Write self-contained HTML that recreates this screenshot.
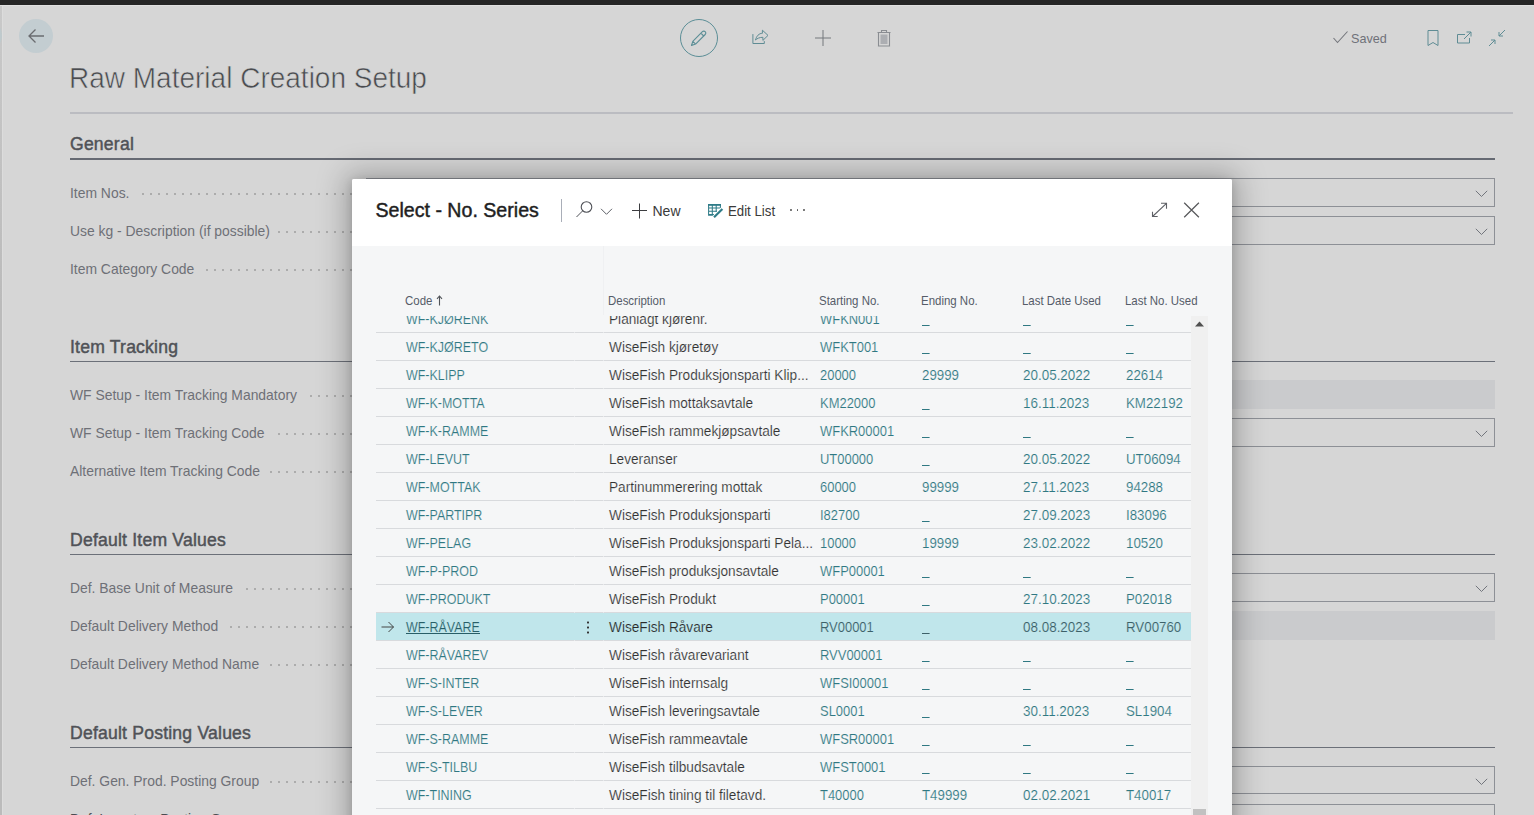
<!DOCTYPE html><html><head><meta charset="utf-8"><title>Raw Material Creation Setup</title><style>
*{margin:0;padding:0;box-sizing:border-box}
html,body{width:1534px;height:815px;overflow:hidden}
body{background:#d6d6d6;font-family:"Liberation Sans",sans-serif;position:relative}
.a{position:absolute;white-space:nowrap}
#topbar{left:0;top:0;width:1534px;height:5px;background:#262626}
#topline{left:0;top:5px;width:1534px;height:1px;background:#e0e0e0}
#leftstrip{left:0;top:6px;width:2px;height:809px;background:linear-gradient(#c9c9c9,#bbbbbb 300px);overflow:hidden}
.lbl{left:70px;font-size:13.9px;color:#6e7077;line-height:16px}
.dots{height:2px;background-image:linear-gradient(to right,#acacac 2px,transparent 2px);background-size:8px 2px;background-repeat:repeat-x}
.sec{left:70px;font-size:17.6px;letter-spacing:0.2px;color:#505257;-webkit-text-stroke:0.45px #505257;line-height:20px}
.secline{left:70px;width:1425px;height:1px;background:#6c7079}
.inp{left:366px;width:1129px;height:29px;border:1px solid #8d9096}
.gblk{left:366px;width:1129px;height:29px;background:#cacbcd}
.chev{position:absolute;right:6.5px;top:10.5px}
#dlg{left:352px;top:179px;width:880px;height:660px;background:#f5f6f7;border-radius:2px;overflow:hidden;
 box-shadow:0 0 30px 6px rgba(0,0,0,0.26), 0 2px 10px rgba(0,0,0,0.14)}
#dlghead{left:0;top:0;width:880px;height:67px;background:#fff}
.ht{font-size:12.2px;color:#555c69;line-height:14px;transform:scaleX(0.94);transform-origin:0 0}
.cell{font-size:14px;line-height:16px;color:#2f7882;-webkit-text-stroke:0.15px #f5f6f7;transform-origin:0 0}
.desc{color:#333}
.rline{height:1px;background:#dcdee1}
</style></head><body>
<div class="a" id="topbar"></div><div class="a" id="topline"></div><div class="a" id="leftstrip"><div class="a" style="left:-31px;top:13px;width:33px;height:33px;border-radius:50%;background:#bfcacd"></div></div><div class="a" style="left:2px;top:6px;width:1px;height:809px;background:#dcdcdc"></div>
<div class="a" style="left:19px;top:19px;width:34px;height:34px;border-radius:50%;background:#c3cdd1"></div>
<svg class="a" style="left:19px;top:19px" width="34" height="34" viewBox="0 0 34 34"><path d="M25 17H10M16.5 10.5L10 17l6.5 6.5" fill="none" stroke="#6a6c70" stroke-width="1.3"/></svg>
<svg class="a" style="left:678px;top:17px" width="42" height="42" viewBox="0 0 42 42"><circle cx="21" cy="21" r="18.5" fill="none" stroke="#5b8e96" stroke-width="1"/><path d="M13.5 28.5l1.3-4.2 9.6-9.6a1.9 1.9 0 0 1 2.8 2.8l-9.6 9.6z M22.9 16.2l2.8 2.8 M14.8 24.3l2.8 2.8" fill="none" stroke="#5b8e96" stroke-width="1.1" stroke-linejoin="round"/></svg>
<svg class="a" style="left:750px;top:28px" width="20" height="20" viewBox="0 0 20 20"><path d="M2.9 6.1V15.5H14.3V13.1" fill="none" stroke="#5f8c94" stroke-width="1"/><path d="M5.5 12C6.5 8 9 5.3 12.4 5.3V2.2L18 7.4L12.9 12.4V9.3C9.5 9.3 7 10.5 5.5 12Z" fill="none" stroke="#5f8c94" stroke-width="1" stroke-linejoin="miter"/></svg>
<svg class="a" style="left:812.5px;top:28px" width="20" height="20" viewBox="0 0 20 20"><path d="M10 2v16M2 10h16" stroke="#75787d" stroke-width="1"/></svg>
<svg class="a" style="left:874px;top:28px" width="20" height="20" viewBox="0 0 20 20"><path d="M3.5 4.5h13 M7.5 4.5v-2h5v2" fill="none" stroke="#8a8d92" stroke-width="1.1"/><path d="M4.5 4.5v13.5h11v-13.5" fill="none" stroke="#8a8d92" stroke-width="1.1"/><rect x="6.5" y="6.5" width="7" height="9.5" fill="#acaeb2"/></svg>
<svg class="a" style="left:1332px;top:30px" width="17" height="14" viewBox="0 0 17 14"><path d="M1.5 8l4 4.5 10-11" fill="none" stroke="#74767c" stroke-width="1.1"/></svg>
<div class="a" style="left:1351px;top:31.5px;font-size:12.6px;line-height:15px;color:#6f7179">Saved</div>
<svg class="a" style="left:1426px;top:29px" width="14" height="18" viewBox="0 0 14 18"><path d="M2 1.5h10v15l-5-3-5 3z" fill="none" stroke="#5f8c94" stroke-width="1"/></svg>
<svg class="a" style="left:1455px;top:30px" width="18" height="15" viewBox="0 0 18 15"><path d="M10 4.5H2.5v8.5h12V8" fill="none" stroke="#5f8c94" stroke-width="1"/><path d="M9 9l7-7M11.5 2h4.5v4.5" fill="none" stroke="#5f8c94" stroke-width="1"/></svg>
<svg class="a" style="left:1488px;top:29px" width="18" height="18" viewBox="0 0 18 18"><path d="M1 17l6-6M3 11h4v4 M17 1l-6 6M11 3v4h4" fill="none" stroke="#5f8c94" stroke-width="1"/></svg>
<div class="a" style="left:69px;top:60.2px;font-size:28px;line-height:34px;color:#4a4c50;-webkit-text-stroke:0.55px #d6d6d6;transform:scaleY(1.06);transform-origin:0 0">Raw Material Creation Setup</div>
<div class="a" style="left:70px;top:112px;width:1443px;height:2px;background:#bbbcc1"></div>
<div class="a sec" style="top:134px">General</div>
<div class="a secline" style="top:158px;height:2px;background:#666a73"></div>
<div class="a lbl" style="top:185px">Item Nos.</div>
<div class="a dots" style="left:142px;top:193px;width:210px"></div>
<div class="a lbl" style="top:223px">Use kg - Description (if possible)</div>
<div class="a dots" style="left:278px;top:231px;width:74px"></div>
<div class="a lbl" style="top:261px">Item Category Code</div>
<div class="a dots" style="left:206px;top:269px;width:146px"></div>
<div class="a lbl" style="top:387px">WF Setup - Item Tracking Mandatory</div>
<div class="a dots" style="left:310px;top:395px;width:42px"></div>
<div class="a lbl" style="top:425px">WF Setup - Item Tracking Code</div>
<div class="a dots" style="left:278px;top:433px;width:74px"></div>
<div class="a lbl" style="top:463px">Alternative Item Tracking Code</div>
<div class="a dots" style="left:270px;top:471px;width:82px"></div>
<div class="a lbl" style="top:580px">Def. Base Unit of Measure</div>
<div class="a dots" style="left:246px;top:588px;width:106px"></div>
<div class="a lbl" style="top:618px">Default Delivery Method</div>
<div class="a dots" style="left:230px;top:626px;width:122px"></div>
<div class="a lbl" style="top:656px">Default Delivery Method Name</div>
<div class="a dots" style="left:270px;top:664px;width:82px"></div>
<div class="a lbl" style="top:773px">Def. Gen. Prod. Posting Group</div>
<div class="a dots" style="left:270px;top:781px;width:82px"></div>
<div class="a sec" style="top:337px">Item Tracking</div>
<div class="a secline" style="top:361px;height:1px;background:#6c7079"></div>
<div class="a sec" style="top:530px">Default Item Values</div>
<div class="a secline" style="top:554px;height:1px;background:#6c7079"></div>
<div class="a sec" style="top:723px">Default Posting Values</div>
<div class="a secline" style="top:747px;height:1px;background:#6c7079"></div>
<div class="a lbl" style="top:811px;color:#4b4d52">Def. Inventory Posting Group</div>
<div class="a dots" style="left:262px;top:819px;width:90px"></div>
<div class="a inp" style="top:178px;height:29px"><svg class="chev" width="13" height="8" viewBox="0 0 13 8"><path d="M0.8 0.8L6.5 6.5L12.2 0.8" fill="none" stroke="#72757c" stroke-width="1"/></svg></div>
<div class="a inp" style="top:216px;height:29px"><svg class="chev" width="13" height="8" viewBox="0 0 13 8"><path d="M0.8 0.8L6.5 6.5L12.2 0.8" fill="none" stroke="#72757c" stroke-width="1"/></svg></div>
<div class="a gblk" style="top:380px;height:29px"></div>
<div class="a inp" style="top:418px;height:29px"><svg class="chev" width="13" height="8" viewBox="0 0 13 8"><path d="M0.8 0.8L6.5 6.5L12.2 0.8" fill="none" stroke="#72757c" stroke-width="1"/></svg></div>
<div class="a inp" style="top:573px;height:29px"><svg class="chev" width="13" height="8" viewBox="0 0 13 8"><path d="M0.8 0.8L6.5 6.5L12.2 0.8" fill="none" stroke="#72757c" stroke-width="1"/></svg></div>
<div class="a gblk" style="top:611px;height:29px"></div>
<div class="a inp" style="top:766px;height:28px"><svg class="chev" width="13" height="8" viewBox="0 0 13 8"><path d="M0.8 0.8L6.5 6.5L12.2 0.8" fill="none" stroke="#72757c" stroke-width="1"/></svg></div>
<div class="a inp" style="top:804px;height:29px"><svg class="chev" width="13" height="8" viewBox="0 0 13 8"><path d="M0.8 0.8L6.5 6.5L12.2 0.8" fill="none" stroke="#72757c" stroke-width="1"/></svg></div>
<div class="a" id="dlg"><div class="a" id="dlghead"></div><div class="a" style="left:23.5px;top:20px;font-size:19.6px;line-height:22px;color:#1f1f1f;-webkit-text-stroke:0.45px #1f1f1f">Select - No. Series</div><div class="a" style="left:209px;top:20px;width:1px;height:23px;background:#a9aeb8"></div><svg class="a" style="left:221.6px;top:21.3px" width="40" height="20" viewBox="0 0 40 20"><circle cx="12.5" cy="7" r="5.3" fill="none" stroke="#4f5157" stroke-width="1.1"/><path d="M8.7 10.8L2.5 17" stroke="#4f5157" stroke-width="1"/><path d="M27 8.8l5.5 5.5 5.5-5.5" fill="none" stroke="#5d6067" stroke-width="1"/></svg><svg class="a" style="left:280px;top:23.5px" width="16" height="16" viewBox="0 0 16 16"><path d="M7.5 0.5v15M0 7.5h15" stroke="#3c3d40" stroke-width="1"/></svg><div class="a" style="left:300.5px;top:24px;font-size:14px;line-height:16px;color:#3a3a3a">New</div><svg class="a" style="left:356px;top:25px" width="16" height="15" viewBox="0 0 16 15"><rect x="0" y="0" width="13" height="1.8" fill="#2f7c88"/><path d="M0.6 0.5V11.2H6 M0.5 4H12.5 M0.5 7.2H9 M0.5 10.6H6 M4.3 1V11 M8.2 1V8 M12.4 0.5V4.5" fill="none" stroke="#2f7c88" stroke-width="1.05"/><path d="M6 13.3L14.4 5" stroke="#fff" stroke-width="4"/><path d="M6 13.3L14.4 5" stroke="#2f7c88" stroke-width="2.2"/></svg><div class="a" style="left:375.5px;top:24px;font-size:14px;line-height:16px;color:#3a3a3a;transform:scaleX(0.945);transform-origin:0 0">Edit List</div><div class="a" style="left:438.3px;top:30px;width:1.8px;height:1.8px;border-radius:50%;background:#555"></div><div class="a" style="left:444.5px;top:30px;width:1.8px;height:1.8px;border-radius:50%;background:#555"></div><div class="a" style="left:450.8px;top:30px;width:1.8px;height:1.8px;border-radius:50%;background:#555"></div><svg class="a" style="left:799px;top:23px" width="17" height="16" viewBox="0 0 17 16"><path d="M1.5 14.5L15.5 1.3 M10 1.3H15.5V6.7 M1.5 9.8V14.5H6.7" fill="none" stroke="#5f6166" stroke-width="1.1"/></svg><svg class="a" style="left:831px;top:23px" width="17" height="17" viewBox="0 0 17 17"><path d="M1.2 0.8L15.9 15.2M15.9 0.8L1.2 15.2" stroke="#58595c" stroke-width="1.25"/></svg><div class="a" style="left:251px;top:67px;width:1px;height:69px;background:#eff0f2"></div><div class="a ht" style="left:52.5px;top:115px">Code</div><div class="a ht" style="left:256px;top:115px">Description</div><div class="a ht" style="left:466.5px;top:115px">Starting No.</div><div class="a ht" style="left:568.5px;top:115px">Ending No.</div><div class="a ht" style="left:670px;top:115px">Last Date Used</div><div class="a ht" style="left:773px;top:115px">Last No. Used</div><svg class="a" style="left:83.5px;top:115.5px" width="7" height="11" viewBox="0 0 7 11"><path d="M3.5 10.5V1M1 3.8L3.5 1 6 3.8" fill="none" stroke="#505358" stroke-width="1.1"/></svg><div class="a" style="left:24px;top:137px;width:815px;height:520px;overflow:hidden"><div class="a cell" style="left:29.5px;top:-5px;transform:scaleX(0.89)">WF-KJØRENK</div><div class="a cell desc" style="left:233px;top:-5px;transform:scaleX(0.975)">Planlagt kjørenr.</div><div class="a cell" style="left:443.5px;top:-5px;transform:scaleX(0.925)">WFKN001</div><div class="a cell" style="left:545.5px;top:9px;width:8px;height:1px;background:currentColor;transform:scaleX(0.95)"></div><div class="a cell" style="left:647px;top:9px;width:8px;height:1px;background:currentColor;transform:scaleX(0.96)"></div><div class="a cell" style="left:750px;top:9px;width:8px;height:1px;background:currentColor;transform:scaleX(0.95)"></div><div class="a rline" style="left:0;top:16px;width:815px;background:linear-gradient(to right,#d8dadd 198px,#e8e9eb 198px,#e8e9eb 199px,#d8dadd 199px,#d8dadd 227px,#e8e9eb 227px,#e8e9eb 228px,#d8dadd 228px)"></div><div class="a cell" style="left:29.5px;top:23px;transform:scaleX(0.89)">WF-KJØRETO</div><div class="a cell desc" style="left:233px;top:23px;transform:scaleX(0.975)">WiseFish kjøretøy</div><div class="a cell" style="left:443.5px;top:23px;transform:scaleX(0.925)">WFKT001</div><div class="a cell" style="left:545.5px;top:37px;width:8px;height:1px;background:currentColor;transform:scaleX(0.95)"></div><div class="a cell" style="left:647px;top:37px;width:8px;height:1px;background:currentColor;transform:scaleX(0.96)"></div><div class="a cell" style="left:750px;top:37px;width:8px;height:1px;background:currentColor;transform:scaleX(0.95)"></div><div class="a rline" style="left:0;top:44px;width:815px;background:linear-gradient(to right,#d8dadd 198px,#e8e9eb 198px,#e8e9eb 199px,#d8dadd 199px,#d8dadd 227px,#e8e9eb 227px,#e8e9eb 228px,#d8dadd 228px)"></div><div class="a cell" style="left:29.5px;top:51px;transform:scaleX(0.89)">WF-KLIPP</div><div class="a cell desc" style="left:233px;top:51px;transform:scaleX(0.975)">WiseFish Produksjonsparti Klip...</div><div class="a cell" style="left:443.5px;top:51px;transform:scaleX(0.925)">20000</div><div class="a cell" style="left:545.5px;top:51px;transform:scaleX(0.95)">29999</div><div class="a cell" style="left:647px;top:51px;transform:scaleX(0.96)">20.05.2022</div><div class="a cell" style="left:750px;top:51px;transform:scaleX(0.95)">22614</div><div class="a rline" style="left:0;top:72px;width:815px;background:linear-gradient(to right,#d8dadd 198px,#e8e9eb 198px,#e8e9eb 199px,#d8dadd 199px,#d8dadd 227px,#e8e9eb 227px,#e8e9eb 228px,#d8dadd 228px)"></div><div class="a cell" style="left:29.5px;top:79px;transform:scaleX(0.89)">WF-K-MOTTA</div><div class="a cell desc" style="left:233px;top:79px;transform:scaleX(0.975)">WiseFish mottaksavtale</div><div class="a cell" style="left:443.5px;top:79px;transform:scaleX(0.925)">KM22000</div><div class="a cell" style="left:545.5px;top:93px;width:8px;height:1px;background:currentColor;transform:scaleX(0.95)"></div><div class="a cell" style="left:647px;top:79px;transform:scaleX(0.96)">16.11.2023</div><div class="a cell" style="left:750px;top:79px;transform:scaleX(0.95)">KM22192</div><div class="a rline" style="left:0;top:100px;width:815px;background:linear-gradient(to right,#d8dadd 198px,#e8e9eb 198px,#e8e9eb 199px,#d8dadd 199px,#d8dadd 227px,#e8e9eb 227px,#e8e9eb 228px,#d8dadd 228px)"></div><div class="a cell" style="left:29.5px;top:107px;transform:scaleX(0.89)">WF-K-RAMME</div><div class="a cell desc" style="left:233px;top:107px;transform:scaleX(0.975)">WiseFish rammekjøpsavtale</div><div class="a cell" style="left:443.5px;top:107px;transform:scaleX(0.925)">WFKR00001</div><div class="a cell" style="left:545.5px;top:121px;width:8px;height:1px;background:currentColor;transform:scaleX(0.95)"></div><div class="a cell" style="left:647px;top:121px;width:8px;height:1px;background:currentColor;transform:scaleX(0.96)"></div><div class="a cell" style="left:750px;top:121px;width:8px;height:1px;background:currentColor;transform:scaleX(0.95)"></div><div class="a rline" style="left:0;top:128px;width:815px;background:linear-gradient(to right,#d8dadd 198px,#e8e9eb 198px,#e8e9eb 199px,#d8dadd 199px,#d8dadd 227px,#e8e9eb 227px,#e8e9eb 228px,#d8dadd 228px)"></div><div class="a cell" style="left:29.5px;top:135px;transform:scaleX(0.89)">WF-LEVUT</div><div class="a cell desc" style="left:233px;top:135px;transform:scaleX(0.975)">Leveranser</div><div class="a cell" style="left:443.5px;top:135px;transform:scaleX(0.925)">UT00000</div><div class="a cell" style="left:545.5px;top:149px;width:8px;height:1px;background:currentColor;transform:scaleX(0.95)"></div><div class="a cell" style="left:647px;top:135px;transform:scaleX(0.96)">20.05.2022</div><div class="a cell" style="left:750px;top:135px;transform:scaleX(0.95)">UT06094</div><div class="a rline" style="left:0;top:156px;width:815px;background:linear-gradient(to right,#d8dadd 198px,#e8e9eb 198px,#e8e9eb 199px,#d8dadd 199px,#d8dadd 227px,#e8e9eb 227px,#e8e9eb 228px,#d8dadd 228px)"></div><div class="a cell" style="left:29.5px;top:163px;transform:scaleX(0.89)">WF-MOTTAK</div><div class="a cell desc" style="left:233px;top:163px;transform:scaleX(0.975)">Partinummerering mottak</div><div class="a cell" style="left:443.5px;top:163px;transform:scaleX(0.925)">60000</div><div class="a cell" style="left:545.5px;top:163px;transform:scaleX(0.95)">99999</div><div class="a cell" style="left:647px;top:163px;transform:scaleX(0.96)">27.11.2023</div><div class="a cell" style="left:750px;top:163px;transform:scaleX(0.95)">94288</div><div class="a rline" style="left:0;top:184px;width:815px;background:linear-gradient(to right,#d8dadd 198px,#e8e9eb 198px,#e8e9eb 199px,#d8dadd 199px,#d8dadd 227px,#e8e9eb 227px,#e8e9eb 228px,#d8dadd 228px)"></div><div class="a cell" style="left:29.5px;top:191px;transform:scaleX(0.89)">WF-PARTIPR</div><div class="a cell desc" style="left:233px;top:191px;transform:scaleX(0.975)">WiseFish Produksjonsparti</div><div class="a cell" style="left:443.5px;top:191px;transform:scaleX(0.925)">I82700</div><div class="a cell" style="left:545.5px;top:205px;width:8px;height:1px;background:currentColor;transform:scaleX(0.95)"></div><div class="a cell" style="left:647px;top:191px;transform:scaleX(0.96)">27.09.2023</div><div class="a cell" style="left:750px;top:191px;transform:scaleX(0.95)">I83096</div><div class="a rline" style="left:0;top:212px;width:815px;background:linear-gradient(to right,#d8dadd 198px,#e8e9eb 198px,#e8e9eb 199px,#d8dadd 199px,#d8dadd 227px,#e8e9eb 227px,#e8e9eb 228px,#d8dadd 228px)"></div><div class="a cell" style="left:29.5px;top:219px;transform:scaleX(0.89)">WF-PELAG</div><div class="a cell desc" style="left:233px;top:219px;transform:scaleX(0.975)">WiseFish Produksjonsparti Pela...</div><div class="a cell" style="left:443.5px;top:219px;transform:scaleX(0.925)">10000</div><div class="a cell" style="left:545.5px;top:219px;transform:scaleX(0.95)">19999</div><div class="a cell" style="left:647px;top:219px;transform:scaleX(0.96)">23.02.2022</div><div class="a cell" style="left:750px;top:219px;transform:scaleX(0.95)">10520</div><div class="a rline" style="left:0;top:240px;width:815px;background:linear-gradient(to right,#d8dadd 198px,#e8e9eb 198px,#e8e9eb 199px,#d8dadd 199px,#d8dadd 227px,#e8e9eb 227px,#e8e9eb 228px,#d8dadd 228px)"></div><div class="a cell" style="left:29.5px;top:247px;transform:scaleX(0.89)">WF-P-PROD</div><div class="a cell desc" style="left:233px;top:247px;transform:scaleX(0.975)">WiseFish produksjonsavtale</div><div class="a cell" style="left:443.5px;top:247px;transform:scaleX(0.925)">WFP00001</div><div class="a cell" style="left:545.5px;top:261px;width:8px;height:1px;background:currentColor;transform:scaleX(0.95)"></div><div class="a cell" style="left:647px;top:261px;width:8px;height:1px;background:currentColor;transform:scaleX(0.96)"></div><div class="a cell" style="left:750px;top:261px;width:8px;height:1px;background:currentColor;transform:scaleX(0.95)"></div><div class="a rline" style="left:0;top:268px;width:815px;background:linear-gradient(to right,#d8dadd 198px,#e8e9eb 198px,#e8e9eb 199px,#d8dadd 199px,#d8dadd 227px,#e8e9eb 227px,#e8e9eb 228px,#d8dadd 228px)"></div><div class="a cell" style="left:29.5px;top:275px;transform:scaleX(0.89)">WF-PRODUKT</div><div class="a cell desc" style="left:233px;top:275px;transform:scaleX(0.975)">WiseFish Produkt</div><div class="a cell" style="left:443.5px;top:275px;transform:scaleX(0.925)">P00001</div><div class="a cell" style="left:545.5px;top:289px;width:8px;height:1px;background:currentColor;transform:scaleX(0.95)"></div><div class="a cell" style="left:647px;top:275px;transform:scaleX(0.96)">27.10.2023</div><div class="a cell" style="left:750px;top:275px;transform:scaleX(0.95)">P02018</div><div class="a rline" style="left:0;top:296px;width:815px;background:linear-gradient(to right,#d8dadd 198px,#e8e9eb 198px,#e8e9eb 199px,#d8dadd 199px,#d8dadd 227px,#e8e9eb 227px,#e8e9eb 228px,#d8dadd 228px)"></div><div class="a" style="left:0;top:297px;width:815px;height:28px;background:#c0e6eb"></div><svg class="a" style="left:5px;top:305px" width="14" height="12" viewBox="0 0 14 12"><path d="M0.5 6h12M7.5 1l5 5-5 5" fill="none" stroke="#3d3d3d" stroke-width="0.95"/></svg><div class="a" style="left:29.5px;top:317px;width:74px;height:1.2px;background:#285e67"></div><div class="a" style="left:211px;top:304px;width:2px;height:14px;background-image:radial-gradient(circle,#333 1px,transparent 1.2px);background-size:2px 5px"></div><div class="a cell" style="left:29.5px;top:303px;-webkit-text-stroke:0.15px #c0e6eb;color:#285e67;transform:scaleX(0.89)">WF-RÅVARE</div><div class="a cell desc" style="left:233px;top:303px;-webkit-text-stroke:0.15px #c0e6eb;color:#2a2a2a;transform:scaleX(0.975)">WiseFish Råvare</div><div class="a cell" style="left:443.5px;top:303px;-webkit-text-stroke:0.15px #c0e6eb;color:#3d6068;transform:scaleX(0.925)">RV00001</div><div class="a cell" style="left:545.5px;top:317px;width:8px;height:1px;background:currentColor;-webkit-text-stroke:0.15px #c0e6eb;color:#3d6068;transform:scaleX(0.95)"></div><div class="a cell" style="left:647px;top:303px;-webkit-text-stroke:0.15px #c0e6eb;color:#3d6068;transform:scaleX(0.96)">08.08.2023</div><div class="a cell" style="left:750px;top:303px;-webkit-text-stroke:0.15px #c0e6eb;color:#3d6068;transform:scaleX(0.95)">RV00760</div><div class="a rline" style="left:0;top:324px;width:815px;background:linear-gradient(to right,#d8dadd 198px,#e8e9eb 198px,#e8e9eb 199px,#d8dadd 199px,#d8dadd 227px,#e8e9eb 227px,#e8e9eb 228px,#d8dadd 228px)"></div><div class="a cell" style="left:29.5px;top:331px;transform:scaleX(0.89)">WF-RÅVAREV</div><div class="a cell desc" style="left:233px;top:331px;transform:scaleX(0.975)">WiseFish råvarevariant</div><div class="a cell" style="left:443.5px;top:331px;transform:scaleX(0.925)">RVV00001</div><div class="a cell" style="left:545.5px;top:345px;width:8px;height:1px;background:currentColor;transform:scaleX(0.95)"></div><div class="a cell" style="left:647px;top:345px;width:8px;height:1px;background:currentColor;transform:scaleX(0.96)"></div><div class="a cell" style="left:750px;top:345px;width:8px;height:1px;background:currentColor;transform:scaleX(0.95)"></div><div class="a rline" style="left:0;top:352px;width:815px;background:linear-gradient(to right,#d8dadd 198px,#e8e9eb 198px,#e8e9eb 199px,#d8dadd 199px,#d8dadd 227px,#e8e9eb 227px,#e8e9eb 228px,#d8dadd 228px)"></div><div class="a cell" style="left:29.5px;top:359px;transform:scaleX(0.89)">WF-S-INTER</div><div class="a cell desc" style="left:233px;top:359px;transform:scaleX(0.975)">WiseFish internsalg</div><div class="a cell" style="left:443.5px;top:359px;transform:scaleX(0.925)">WFSI00001</div><div class="a cell" style="left:545.5px;top:373px;width:8px;height:1px;background:currentColor;transform:scaleX(0.95)"></div><div class="a cell" style="left:647px;top:373px;width:8px;height:1px;background:currentColor;transform:scaleX(0.96)"></div><div class="a cell" style="left:750px;top:373px;width:8px;height:1px;background:currentColor;transform:scaleX(0.95)"></div><div class="a rline" style="left:0;top:380px;width:815px;background:linear-gradient(to right,#d8dadd 198px,#e8e9eb 198px,#e8e9eb 199px,#d8dadd 199px,#d8dadd 227px,#e8e9eb 227px,#e8e9eb 228px,#d8dadd 228px)"></div><div class="a cell" style="left:29.5px;top:387px;transform:scaleX(0.89)">WF-S-LEVER</div><div class="a cell desc" style="left:233px;top:387px;transform:scaleX(0.975)">WiseFish leveringsavtale</div><div class="a cell" style="left:443.5px;top:387px;transform:scaleX(0.925)">SL0001</div><div class="a cell" style="left:545.5px;top:401px;width:8px;height:1px;background:currentColor;transform:scaleX(0.95)"></div><div class="a cell" style="left:647px;top:387px;transform:scaleX(0.96)">30.11.2023</div><div class="a cell" style="left:750px;top:387px;transform:scaleX(0.95)">SL1904</div><div class="a rline" style="left:0;top:408px;width:815px;background:linear-gradient(to right,#d8dadd 198px,#e8e9eb 198px,#e8e9eb 199px,#d8dadd 199px,#d8dadd 227px,#e8e9eb 227px,#e8e9eb 228px,#d8dadd 228px)"></div><div class="a cell" style="left:29.5px;top:415px;transform:scaleX(0.89)">WF-S-RAMME</div><div class="a cell desc" style="left:233px;top:415px;transform:scaleX(0.975)">WiseFish rammeavtale</div><div class="a cell" style="left:443.5px;top:415px;transform:scaleX(0.925)">WFSR00001</div><div class="a cell" style="left:545.5px;top:429px;width:8px;height:1px;background:currentColor;transform:scaleX(0.95)"></div><div class="a cell" style="left:647px;top:429px;width:8px;height:1px;background:currentColor;transform:scaleX(0.96)"></div><div class="a cell" style="left:750px;top:429px;width:8px;height:1px;background:currentColor;transform:scaleX(0.95)"></div><div class="a rline" style="left:0;top:436px;width:815px;background:linear-gradient(to right,#d8dadd 198px,#e8e9eb 198px,#e8e9eb 199px,#d8dadd 199px,#d8dadd 227px,#e8e9eb 227px,#e8e9eb 228px,#d8dadd 228px)"></div><div class="a cell" style="left:29.5px;top:443px;transform:scaleX(0.89)">WF-S-TILBU</div><div class="a cell desc" style="left:233px;top:443px;transform:scaleX(0.975)">WiseFish tilbudsavtale</div><div class="a cell" style="left:443.5px;top:443px;transform:scaleX(0.925)">WFST0001</div><div class="a cell" style="left:545.5px;top:457px;width:8px;height:1px;background:currentColor;transform:scaleX(0.95)"></div><div class="a cell" style="left:647px;top:457px;width:8px;height:1px;background:currentColor;transform:scaleX(0.96)"></div><div class="a cell" style="left:750px;top:457px;width:8px;height:1px;background:currentColor;transform:scaleX(0.95)"></div><div class="a rline" style="left:0;top:464px;width:815px;background:linear-gradient(to right,#d8dadd 198px,#e8e9eb 198px,#e8e9eb 199px,#d8dadd 199px,#d8dadd 227px,#e8e9eb 227px,#e8e9eb 228px,#d8dadd 228px)"></div><div class="a cell" style="left:29.5px;top:471px;transform:scaleX(0.89)">WF-TINING</div><div class="a cell desc" style="left:233px;top:471px;transform:scaleX(0.975)">WiseFish tining til filetavd.</div><div class="a cell" style="left:443.5px;top:471px;transform:scaleX(0.925)">T40000</div><div class="a cell" style="left:545.5px;top:471px;transform:scaleX(0.95)">T49999</div><div class="a cell" style="left:647px;top:471px;transform:scaleX(0.96)">02.02.2021</div><div class="a cell" style="left:750px;top:471px;transform:scaleX(0.95)">T40017</div><div class="a rline" style="left:0;top:492px;width:815px;background:linear-gradient(to right,#d8dadd 198px,#e8e9eb 198px,#e8e9eb 199px,#d8dadd 199px,#d8dadd 227px,#e8e9eb 227px,#e8e9eb 228px,#d8dadd 228px)"></div></div><div class="a" style="left:839px;top:137px;width:17px;height:520px;background:#f0f0f0"></div><svg class="a" style="left:843px;top:142px" width="9" height="6" viewBox="0 0 9 6"><path d="M0 5.5L4.5 0.5 9 5.5z" fill="#505050"/></svg><div class="a" style="left:841px;top:630px;width:13px;height:20px;background:#c1c1c1"></div></div>
</body></html>
